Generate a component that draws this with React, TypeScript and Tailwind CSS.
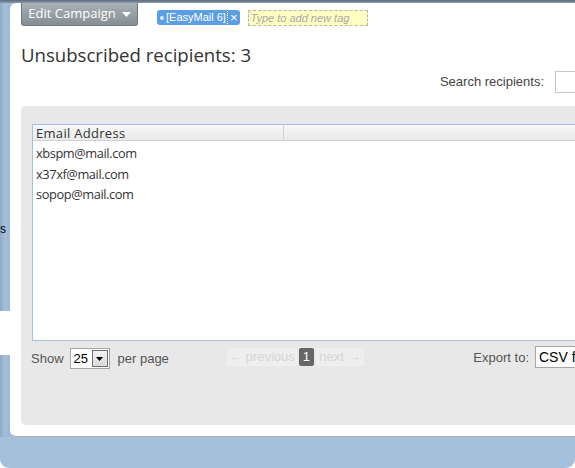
import React from "react";

const segoe = { fontFamily: '"Open Sans", "Noto Sans", Arial, sans-serif' };
const arial = { fontFamily: '"Liberation Sans", Arial, sans-serif' };

const emails = ["xbspm@mail.com", "x37xf@mail.com", "sopop@mail.com"];

function TagPill() {
  return (
    <div className="flex h-[15px] items-center rounded-[3px] bg-[#5b9ee4] pl-[3px] text-[11px] leading-none text-white" style={arial}>
      <span className="mr-[2px] inline-block h-[4px] w-[4px] rounded-full bg-[#d8e8fa]" />
      <span className="pr-[1px]">[EasyMail 6]</span>
      <span className="h-[13px] border-l border-dotted border-white" />
      <span className="px-[2px] text-[13px]">×</span>
    </div>
  );
}

export default function App() {
  return (
    <div className="flex h-[468px] w-[575px] flex-col overflow-hidden rounded-b-[9px] bg-[#a5c0db]">
      {/* window top edge */}
      <div className="h-[3px] bg-gradient-to-b from-[#5e6b79] to-[#8a9bb0]" />

      <div className="flex h-[434px]">
        {/* left frame strip */}
        <div className="flex w-[10px] flex-col bg-gradient-to-r from-[#8fa9c4] via-[#a5c0db] to-[#9db7d2]">
          <div className="h-[219px]" />
          <div className="text-[12px] leading-[15px] text-black" style={arial}>
            s
          </div>
          <div className="h-[74px]" />
          <div className="h-[44px] bg-white" />
        </div>

        {/* main content panel */}
        <div className="flex flex-1 flex-col rounded-l-[6px] border-b border-[#a8a8a8] bg-white pl-[11px]">
          <div className="flex items-start">
            <div
              className="flex h-[23px] w-[117px] items-center justify-center gap-[6px] rounded-b-[3px] border border-t-0 border-[#6f787e] bg-gradient-to-b from-[#a9b1b6] to-[#858e94] text-[13px] text-white"
              style={segoe}
            >
              <span>Edit Campaign</span>
              <svg width="9" height="5" viewBox="0 0 9 5">
                <path d="M0 0h9L4.5 5z" fill="#fff" />
              </svg>
            </div>
            <div className="ml-[19px] mt-[7px]">
              <TagPill />
            </div>
            <div
              className="ml-[8px] mt-[7px] flex h-[16px] w-[120px] items-center border border-dashed border-[#b8b8a0] bg-[#ffffc2] pl-[2px] text-[11px] italic text-[#a8a8a8]"
              style={arial}
            >
              Type to add new tag
            </div>
          </div>

          <h1 className="mt-[17px] text-[18.6px] leading-[24px] text-[#333]" style={segoe}>
            Unsubscribed recipients: 3
          </h1>

          <div className="mt-[3px] flex h-[24px] items-center justify-end">
            <span className="text-[13px] text-[#444]" style={arial}>
              Search recipients:
            </span>
            <div className="ml-[11px] mr-[-10px] h-[22px] w-[30px] border border-[#c8c8c8] bg-white" />
          </div>

          {/* gray table panel */}
          <div className="mr-[-6px] mt-[12px] flex h-[319px] flex-col rounded-[5px] bg-[#e8e8e8] pl-[11px] pt-[18px]">
            <div className="h-[217px] border border-r-0 border-[#a3c2e6] bg-white">
              <div className="flex h-[16px] border-b border-[#cfd3d8] bg-gradient-to-b from-[#f7f7f7] to-[#e9eaeb]">
                <div className="w-[251px] border-r border-[#cfd3d8] pl-[3px] text-[13px] leading-[16px] tracking-[0.3px] text-[#333]" style={segoe}>
                  Email Address
                </div>
              </div>
              <div className="pt-[2px]">
                {emails.map((e) => (
                  <div key={e} className="h-[20.5px] pl-[3px] text-[12.8px] leading-[20.5px] tracking-[-0.4px] text-[#333]" style={segoe}>
                    {e}
                  </div>
                ))}
              </div>
            </div>

            <div className="mt-[5px] flex items-start text-[13px] text-[#555]" style={arial}>
              <div className="mt-[2px] flex items-center">
                <span className="ml-[-1px]">Show</span>
                <div className="ml-[6px] flex h-[21px] w-[40px] items-center border border-[#a6a6a6] bg-white">
                  <span className="pl-[3px] text-black">25</span>
                  <div className="ml-auto mr-[1px] flex h-[17px] w-[16px] items-center justify-center border border-[#707070] bg-gradient-to-b from-[#f4f4f4] to-[#d9d9d9]">
                    <svg width="7" height="4" viewBox="0 0 7 4">
                      <path d="M0 0h7L3.5 4z" fill="#000" />
                    </svg>
                  </div>
                </div>
                <span className="ml-[8px]">per page</span>
              </div>

              <div className="ml-[58px] mt-[2px] flex items-center gap-[2px] text-[13px]">
                <div className="flex h-[18px] w-[70px] items-center justify-center rounded-[2px] border border-[#f0f0f0] bg-[#eeeeee] text-[#d6d6d6]">
                  ← previous
                </div>
                <div className="flex h-[18px] w-[15px] items-center justify-center rounded-[2px] bg-[#666] text-white">
                  1
                </div>
                <div className="flex h-[18px] w-[48px] items-center justify-center rounded-[2px] border border-[#f0f0f0] bg-[#eeeeee] text-[#d6d6d6]">
                  next →
                </div>
              </div>

              <div className="ml-auto flex items-center">
                <span className="mt-[1px]">Export to:</span>
                <div className="ml-[6px] mr-[-10px] flex h-[22px] w-[56px] items-center overflow-hidden whitespace-nowrap border border-[#a6a6a6] bg-white pl-[3px] text-[14px] text-black">
                  CSV file
                </div>
              </div>
            </div>
          </div>
        </div>
      </div>
    </div>
  );
}
